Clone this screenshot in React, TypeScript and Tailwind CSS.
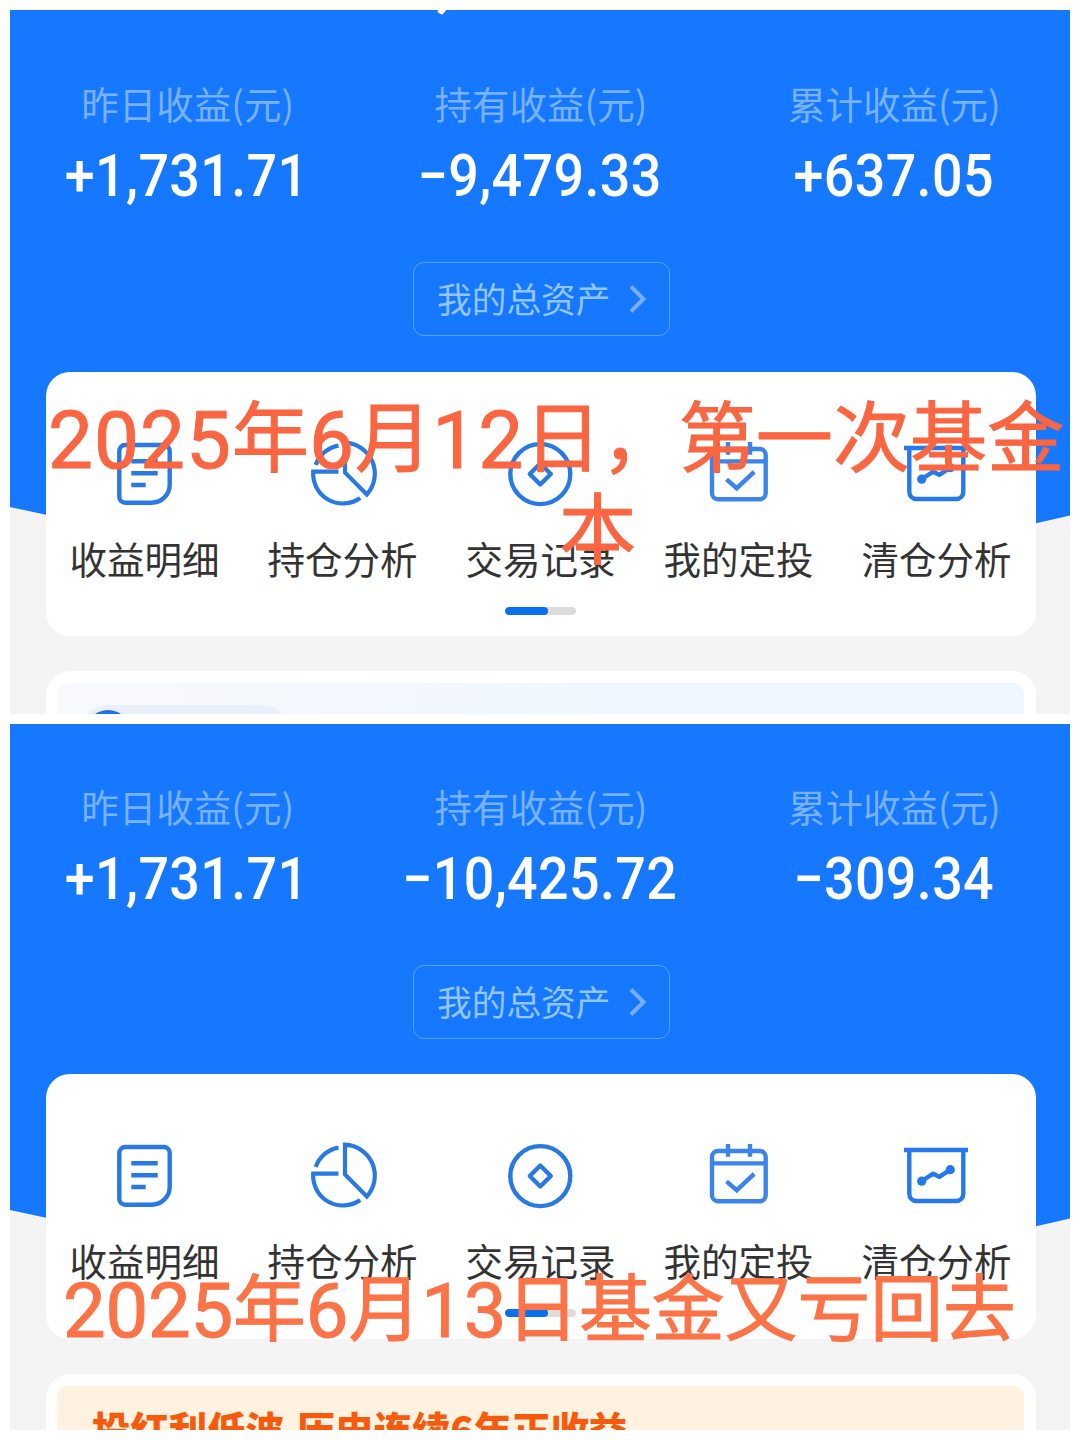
import type { ReactNode } from 'react';
import clsx from 'clsx';

interface Stat {
  label: string;
  value: string;
}

const TOP_STATS: Stat[] = [
  { label: '昨日收益(元)', value: '+1,731.71' },
  { label: '持有收益(元)', value: '−9,479.33' },
  { label: '累计收益(元)', value: '+637.05' },
];

const BOTTOM_STATS: Stat[] = [
  { label: '昨日收益(元)', value: '+1,731.71' },
  { label: '持有收益(元)', value: '−10,425.72' },
  { label: '累计收益(元)', value: '−309.34' },
];

function DetailIcon() {
  return (
    <svg viewBox="0 0 72 72" className="size-[72px]" fill="none" stroke="#2979e2" strokeWidth="4.4">
      <path d="M16.3 7h38.4a6 6 0 0 1 6 6v33.7a18 18 0 0 1-18 18H16.3a6 6 0 0 1-6-6V13a6 6 0 0 1 6-6z" />
      <path d="M22.3 23.3h26.4M22.3 35.2h26.4M22.3 47h14.4" />
    </svg>
  );
}

function PieIcon() {
  return (
    <svg viewBox="0 0 72 72" className="size-[72px]" fill="none" stroke="#2979e2" strokeWidth="4.2">
      <path d="M38 4.7v29.8l21.8 22A31 31 0 0 0 38 4.7z" />
      <path d="M31.5 33.7H6.2A29.8 29.8 0 0 0 53.2 60" />
      <path d="M8.7 26.9A29.5 29.5 0 0 1 31.5 7.6" />
    </svg>
  );
}

function CoinIcon() {
  return (
    <svg viewBox="0 0 72 72" className="size-[72px]" fill="none" stroke="#2979e2" strokeWidth="4.4">
      <circle cx="35.3" cy="36.1" r="30" />
      <path d="M35.3 25.5 45.8 36 35.3 46.5 24.8 36z" strokeLinejoin="round" />
    </svg>
  );
}

function CalendarIcon() {
  return (
    <svg viewBox="0 0 72 72" className="size-[72px]" fill="none" stroke="#3b85ea" strokeWidth="4.4">
      <rect x="9" y="11" width="53.7" height="50.3" rx="6" />
      <path d="M9 23.4h53.7M25 4v12.8M47 4v12.8" />
      <path d="m23.5 41.3 10.2 8.9 17.5-16.4" />
    </svg>
  );
}

function ChartIcon() {
  return (
    <svg viewBox="0 0 72 72" className="size-[72px]" fill="none" stroke="#2679ea" strokeWidth="4.4">
      <path d="M3 10h64M8.3 10v44a7 7 0 0 0 7 7h40a7 7 0 0 0 7-7V10" />
      <path d="m20.7 41 11.6-7.3 6 3.2 11-7.2" strokeLinejoin="round" />
      <circle cx="20.7" cy="41.2" r="4.6" fill="#2679ea" stroke="none" />
      <circle cx="49.3" cy="29.7" r="4.6" fill="#2679ea" stroke="none" />
    </svg>
  );
}

const SHORTCUTS = [
  { label: '收益明细', Icon: DetailIcon },
  { label: '持仓分析', Icon: PieIcon },
  { label: '交易记录', Icon: CoinIcon },
  { label: '我的定投', Icon: CalendarIcon },
  { label: '清仓分析', Icon: ChartIcon },
];

// Digits are set in Roboto, a bit larger than the Chinese characters around them
function Caption({ text, digitClass }: { text: string; digitClass: string }) {
  return (
    <>
      {text.split(/(\d+)/).map((part, i) =>
        /^\d+$/.test(part)
          ? <span key={i} className={clsx('relative font-[Roboto]', digitClass)}>{part}</span>
          : part
      )}
    </>
  );
}

interface AssetScreenProps {
  stats: Stat[];
  contentClass?: string;
  heightClass: string;
  banner: ReactNode;
  children: ReactNode;
}

function AssetScreen({ stats, contentClass, heightClass, banner, children }: AssetScreenProps) {
  return (
    <section className={clsx('relative overflow-hidden bg-[#f4f4f4]', heightClass)}>
      <div className={clsx('relative', contentClass)}>
        {/* Blue header backdrop */}
        <svg className="absolute top-0 left-0" width="1060" height="520" viewBox="0 0 1060 520">
          <path d="M0 0h1060v505.5l-34 7.8L530 560 36 504.8 0 497z" fill="#1677ff" />
        </svg>

        <div className="relative flex flex-col items-center">
          <div className="grid w-full grid-cols-3 pt-[73px] text-center">
            {stats.map((s) => (
              <div key={s.label}>
                <div className="pl-[2px] text-[37.5px] leading-[40px] whitespace-nowrap text-[#77b2ff]">{s.label}</div>
                <div className="mt-[23px] scale-x-[0.92] font-[Roboto] text-[58.5px] leading-[60px] font-medium tracking-[0.4px] whitespace-nowrap text-white">
                  {s.value}
                </div>
              </div>
            ))}
          </div>

          <button className="mt-[56px] ml-[3px] flex h-[74px] w-[257px] items-center rounded-[11px] border border-[#58a3fc] pl-[23px] text-[34.7px] text-[#93c5ff]">
            <span className="pb-px whitespace-nowrap">我的总资产</span>
            <svg width="18" height="28" viewBox="0 0 18 28" className="ml-[19px]" fill="none" stroke="#75aefb" strokeWidth="4">
              <path d="m2 1.5 12.5 12.5L2 26.5" />
            </svg>
          </button>

          <div className="mt-[35.5px] ml-[2px] flex h-[264.5px] w-[990px] flex-col items-center rounded-[24px] bg-white pt-[66px]">
            <div className="grid w-full grid-cols-5">
              {SHORTCUTS.map(({ label, Icon }) => (
                <div key={label} className="flex flex-col items-center">
                  <Icon />
                  <span className="mt-[28px] mr-[1px] text-[37.5px] leading-[40px] whitespace-nowrap text-[#333]">{label}</span>
                </div>
              ))}
            </div>
            <div className="mt-[29px] mr-[2px] h-2 w-[71px] overflow-hidden rounded-full bg-[#dcdcdc]">
              <div className="h-full w-[43px] rounded-full bg-[#0a71ee]" />
            </div>
          </div>

          <div className="mt-[35px] ml-[2px] h-[120px] w-[990px] rounded-[24px] bg-white pt-3 pr-3 pl-[11px]">
            {banner}
          </div>
        </div>
      </div>
      {children}
    </section>
  );
}

export default function App() {
  return (
    <main className="flex h-[1440px] w-[1080px] flex-col gap-[10px] overflow-hidden bg-white p-[10px] font-['Noto_Sans_CJK_SC',sans-serif]">
      <AssetScreen
        stats={TOP_STATS}
        heightClass="h-[704px]"
        banner={
          <div className="h-[108px] rounded-[11px] bg-linear-to-r from-[#f8f9fc] to-[#eff6ff] to-60% pt-[22px] pl-[22px]">
            <div className="h-[60px] w-[212px] rounded-full bg-[#e9f0fc] pt-[5px] pl-[6px]">
              <div className="size-[46px] rounded-full bg-[#1f74e4]" />
            </div>
          </div>
        }
      >
        {/* Tail of the total amount scrolled off above */}
        <span className="absolute top-[-71px] left-[426px] font-[Roboto] text-[76px] leading-[76px] font-medium text-white">,</span>
        <p className="absolute top-[379px] left-[38px] text-[77.2px] leading-[86px] whitespace-nowrap text-[#f96641] [-webkit-text-stroke:1px_#f96641]">
          <Caption text="2025年6月12日，第一次基金" digitClass="top-[2px] text-[80px] tracking-[1px]" />
          <br />
          <span className="relative -top-px ml-[511px]">本</span>
        </p>
      </AssetScreen>

      <AssetScreen
        stats={BOTTOM_STATS}
        heightClass="h-[706px]"
        contentClass="mt-[-11.5px]"
        banner={
          <div className="h-[108px] rounded-[11px] bg-[#fff2e1] pt-[22px] pl-[35px] text-[38.4px] leading-[40px] font-black [word-spacing:4px] whitespace-nowrap text-[#f65a0c]">
            投红利低波 历史连续6年正收益
          </div>
        }
      >
        <p className="absolute top-[535px] left-[53px] text-[72.8px] leading-[90px] whitespace-nowrap text-[#fc7347] [-webkit-text-stroke:1px_#fc7347]">
          <Caption text="2025年6月13日基金又亏回去" digitClass="top-[2px] text-[76px] tracking-[-0.2px]" />
        </p>
      </AssetScreen>
    </main>
  );
}
